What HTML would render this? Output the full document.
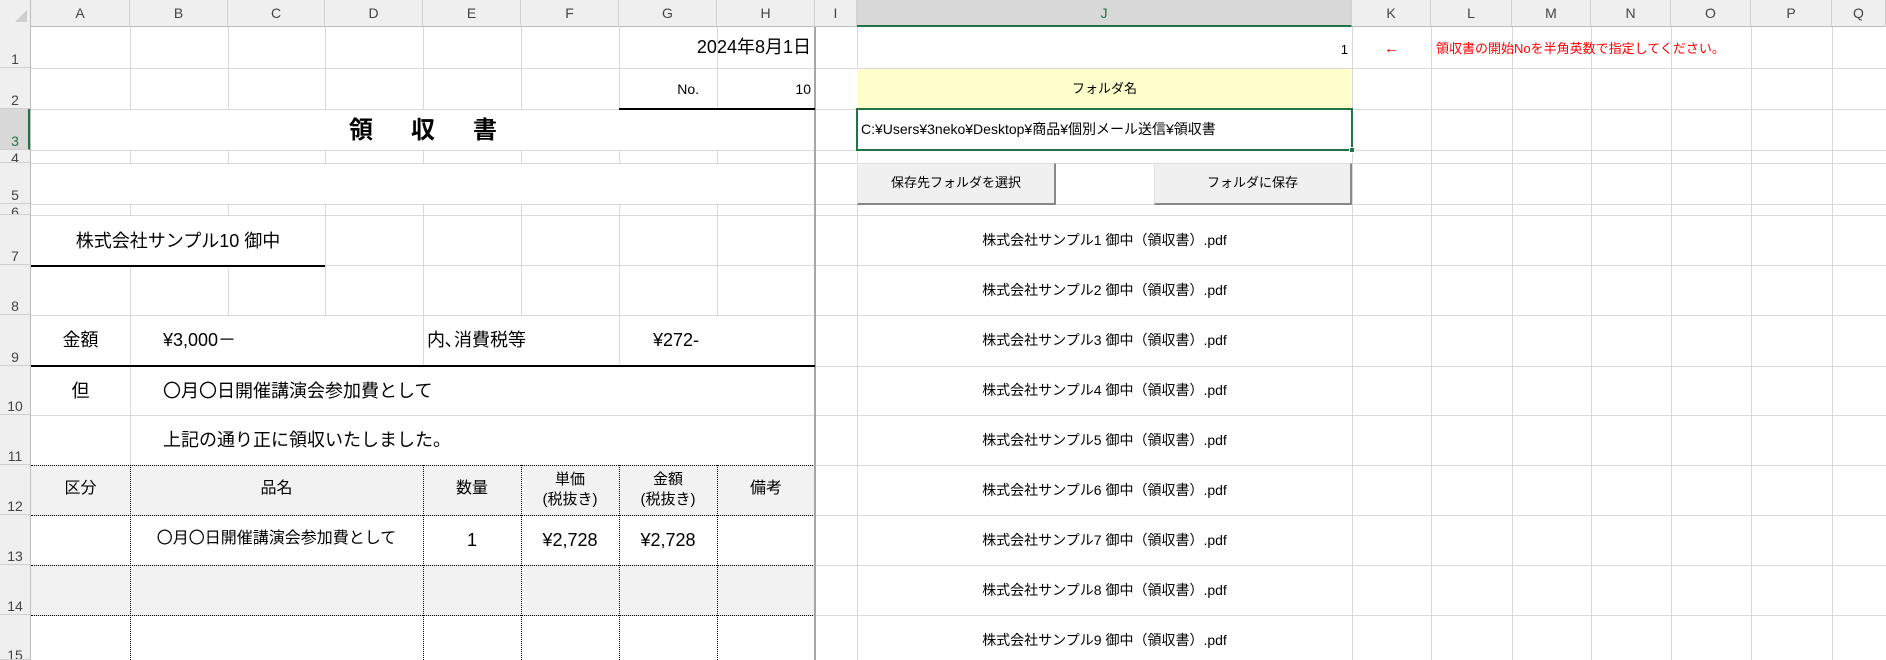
<!DOCTYPE html>
<html><head><meta charset="utf-8">
<style>
*{margin:0;padding:0;box-sizing:border-box}
body{width:1886px;height:660px;overflow:hidden;background:#fff;font-family:"Liberation Sans","Noto Sans CJK JP",sans-serif;position:relative;color:#000}
div{position:absolute}
.v{width:1px;top:27px;height:633px;background:#d9d9d9}
.h{height:1px;left:31px;width:1855px;background:#d9d9d9}
.ch{top:0;height:27px;line-height:27px;text-align:center;font-size:14px;color:#444;border-right:1px solid #d0d0d0}
.rh{left:0;width:30px;overflow:hidden;font-size:14px;color:#444;text-align:center;border-bottom:1px solid #d0d0d0}
.rh span{position:absolute;bottom:0;left:0;width:30px;text-align:center;line-height:16px}
.w{background:#fff}
.t{white-space:nowrap;line-height:1}
.dv{width:0;border-left:1px dotted #000;top:465px;height:195px}
.dh{height:0;border-top:1px dotted #000;left:31px;width:784px}
.j{left:857px;width:495px;text-align:center;font-size:14px;white-space:nowrap;line-height:1}
.btn{background:#f0f0f0;border-right:2px solid #888;border-bottom:2px solid #888;border-top:1px solid #e0e0e0;border-left:1px solid #e0e0e0;font-size:13px;text-align:center;line-height:38px}
</style></head><body>
<!-- header row -->
<div style="left:0;top:0;width:1886px;height:27px;background:#efefef;border-bottom:1px solid #bdbdbd"></div>
<div style="left:0;top:0;width:31px;height:660px;background:#efefef;border-right:1px solid #bdbdbd"></div>
<div style="left:15px;top:10px;width:0;height:0;border-left:12px solid transparent;border-bottom:12px solid #cfcfcf"></div>
<div class="ch" style="left:31px;width:99px">A</div>
<div class="ch" style="left:130px;width:98px">B</div>
<div class="ch" style="left:228px;width:97px">C</div>
<div class="ch" style="left:325px;width:98px">D</div>
<div class="ch" style="left:423px;width:98px">E</div>
<div class="ch" style="left:521px;width:98px">F</div>
<div class="ch" style="left:619px;width:98px">G</div>
<div class="ch" style="left:717px;width:98px">H</div>
<div class="ch" style="left:815px;width:42px">I</div>
<div class="ch" style="left:857px;width:495px;background:#d8d8d8;border-bottom:2px solid #217346;color:#217346;height:27px">J</div>
<div class="ch" style="left:1352px;width:79px">K</div>
<div class="ch" style="left:1431px;width:81px">L</div>
<div class="ch" style="left:1512px;width:79px">M</div>
<div class="ch" style="left:1591px;width:80px">N</div>
<div class="ch" style="left:1671px;width:80px">O</div>
<div class="ch" style="left:1751px;width:81px">P</div>
<div class="ch" style="left:1832px;width:54px">Q</div>
<!-- row headers -->
<div class="rh" style="top:27px;height:41px"><span>1</span></div>
<div class="rh" style="top:68px;height:41px"><span>2</span></div>
<div class="rh" style="top:109px;height:41px;background:#d8d8d8;border-right:2px solid #217346;color:#217346"><span>3</span></div>
<div class="rh" style="top:150px;height:13px"><span style="bottom:-4px">4</span></div>
<div class="rh" style="top:163px;height:41px"><span>5</span></div>
<div class="rh" style="top:204px;height:11px"><span style="bottom:-6px">6</span></div>
<div class="rh" style="top:215px;height:50px"><span>7</span></div>
<div class="rh" style="top:265px;height:50px"><span>8</span></div>
<div class="rh" style="top:315px;height:51px"><span>9</span></div>
<div class="rh" style="top:366px;height:49px"><span>10</span></div>
<div class="rh" style="top:415px;height:50px"><span>11</span></div>
<div class="rh" style="top:465px;height:50px"><span>12</span></div>
<div class="rh" style="top:515px;height:50px"><span>13</span></div>
<div class="rh" style="top:565px;height:50px"><span>14</span></div>
<div class="rh" style="top:615px;height:45px"><span style="bottom:-4px">15</span></div>
<!-- gridlines -->
<div class="v" style="left:130px"></div><div class="v" style="left:228px"></div><div class="v" style="left:325px"></div>
<div class="v" style="left:423px"></div><div class="v" style="left:521px"></div><div class="v" style="left:619px"></div>
<div class="v" style="left:717px"></div><div class="v" style="left:857px"></div><div class="v" style="left:1352px"></div>
<div class="v" style="left:1431px"></div><div class="v" style="left:1512px"></div><div class="v" style="left:1591px"></div>
<div class="v" style="left:1671px"></div><div class="v" style="left:1751px"></div><div class="v" style="left:1832px"></div>
<div class="h" style="top:68px"></div><div class="h" style="top:109px"></div><div class="h" style="top:150px"></div>
<div class="h" style="top:163px"></div><div class="h" style="top:204px"></div><div class="h" style="top:215px"></div>
<div class="h" style="top:265px"></div><div class="h" style="top:315px"></div><div class="h" style="top:366px"></div>
<div class="h" style="top:415px"></div><div class="h" style="top:465px"></div><div class="h" style="top:515px"></div>
<div class="h" style="top:565px"></div><div class="h" style="top:615px"></div>
<!-- merged covers -->
<div class="w" style="left:31px;top:110px;width:784px;height:40px"></div>
<div class="w" style="left:31px;top:164px;width:784px;height:40px"></div>
<div class="w" style="left:31px;top:216px;width:294px;height:49px"></div>
<div class="w" style="left:131px;top:316px;width:292px;height:50px"></div>
<div class="w" style="left:424px;top:316px;width:195px;height:50px"></div>
<div class="w" style="left:620px;top:316px;width:195px;height:50px"></div>
<div class="w" style="left:131px;top:367px;width:684px;height:48px"></div>
<div class="w" style="left:131px;top:416px;width:684px;height:49px"></div>
<div style="left:31px;top:466px;width:784px;height:49px;background:#f2f2f2"></div>
<div class="w" style="left:31px;top:516px;width:784px;height:49px"></div>
<div style="left:31px;top:566px;width:784px;height:49px;background:#f2f2f2"></div>
<div class="w" style="left:31px;top:616px;width:784px;height:44px"></div>
<!-- dotted table -->
<div class="dh" style="top:465px"></div><div class="dh" style="top:515px"></div>
<div class="dh" style="top:565px"></div><div class="dh" style="top:615px"></div>
<div class="dv" style="left:130px"></div><div class="dv" style="left:423px"></div>
<div class="dv" style="left:521px"></div><div class="dv" style="left:619px"></div><div class="dv" style="left:717px"></div>
<!-- borders -->
<div style="left:814px;top:27px;width:2px;height:633px;background:#a6a6a6"></div>
<div style="left:619px;top:108px;width:196px;height:2px;background:#000"></div>
<div style="left:31px;top:265px;width:294px;height:2px;background:#000"></div>
<div style="left:31px;top:365px;width:784px;height:2px;background:#000"></div>
<!-- text -->
<div class="t" style="left:619px;width:192px;top:38px;text-align:right;font-size:18px">2024年8月1日</div>
<div class="t" style="left:619px;width:80px;top:82px;text-align:right;font-size:14px">No.</div>
<div class="t" style="left:717px;width:94px;top:82px;text-align:right;font-size:14px">10</div>
<div class="t" style="left:31px;width:784px;top:119px;text-align:center;font-size:24px;font-weight:bold;letter-spacing:38px;text-indent:38px">領収書</div>
<div class="t" style="left:31px;width:294px;top:232px;text-align:center;font-size:18px">株式会社サンプル10 御中</div>
<div class="t" style="left:31px;width:99px;top:331px;text-align:center;font-size:18px">金額</div>
<div class="t" style="left:163px;top:331px;font-size:18px">¥3,000－</div>
<div class="t" style="left:427px;top:331px;font-size:18px">内､消費税等</div>
<div class="t" style="left:653px;top:331px;font-size:18px">¥272-</div>
<div class="t" style="left:31px;width:99px;top:382px;text-align:center;font-size:18px">但</div>
<div class="t" style="left:163px;top:382px;font-size:18px">〇月〇日開催講演会参加費として</div>
<div class="t" style="left:163px;top:431px;font-size:18px">上記の通り正に領収いたしました。</div>
<div class="t" style="left:31px;width:99px;top:481px;text-align:center;font-size:16px">区分</div>
<div class="t" style="left:130px;width:293px;top:481px;text-align:center;font-size:16px">品名</div>
<div class="t" style="left:423px;width:98px;top:481px;text-align:center;font-size:16px">数量</div>
<div class="t" style="left:521px;width:98px;top:470px;text-align:center;font-size:15px;line-height:20px">単価<br>(税抜き)</div>
<div class="t" style="left:619px;width:98px;top:470px;text-align:center;font-size:15px;line-height:20px">金額<br>(税抜き)</div>
<div class="t" style="left:717px;width:98px;top:481px;text-align:center;font-size:16px">備考</div>
<div class="t" style="left:130px;width:293px;top:531px;text-align:center;font-size:16px">〇月〇日開催講演会参加費として</div>
<div class="t" style="left:423px;width:98px;top:531px;text-align:center;font-size:18px">1</div>
<div class="t" style="left:521px;width:98px;top:531px;text-align:center;font-size:18px">¥2,728</div>
<div class="t" style="left:619px;width:98px;top:531px;text-align:center;font-size:18px">¥2,728</div>
<!-- right side -->
<div class="t" style="left:857px;width:491px;top:43px;text-align:right;font-size:13px">1</div>
<div class="t" style="left:1352px;width:79px;top:41px;text-align:center;font-size:15px;color:#f00">←</div>
<div class="t" style="left:1436px;top:42px;font-size:13px;color:#f00">領収書の開始Noを半角英数で指定してください。</div>
<div style="left:857px;top:69px;width:495px;height:40px;background:#ffffcc"></div>
<div class="j" style="top:82px;font-size:13px">フォルダ名</div>
<div style="left:856px;top:108px;width:497px;height:43px;border:2px solid #217346"></div>
<div style="left:1349px;top:147px;width:6px;height:6px;background:#217346;border:1px solid #fff"></div>
<div class="t" style="left:861px;top:122px;font-size:14px">C:¥Users¥3neko¥Desktop¥商品¥個別メール送信¥領収書</div>
<div class="btn" style="left:857px;top:163px;width:199px;height:42px">保存先フォルダを選択</div>
<div class="btn" style="left:1154px;top:163px;width:198px;height:42px">フォルダに保存</div>
<div class="j" style="top:233px">株式会社サンプル1 御中（領収書）.pdf</div>
<div class="j" style="top:283px">株式会社サンプル2 御中（領収書）.pdf</div>
<div class="j" style="top:333px">株式会社サンプル3 御中（領収書）.pdf</div>
<div class="j" style="top:383px">株式会社サンプル4 御中（領収書）.pdf</div>
<div class="j" style="top:433px">株式会社サンプル5 御中（領収書）.pdf</div>
<div class="j" style="top:483px">株式会社サンプル6 御中（領収書）.pdf</div>
<div class="j" style="top:533px">株式会社サンプル7 御中（領収書）.pdf</div>
<div class="j" style="top:583px">株式会社サンプル8 御中（領収書）.pdf</div>
<div class="j" style="top:633px">株式会社サンプル9 御中（領収書）.pdf</div>
</body></html>
